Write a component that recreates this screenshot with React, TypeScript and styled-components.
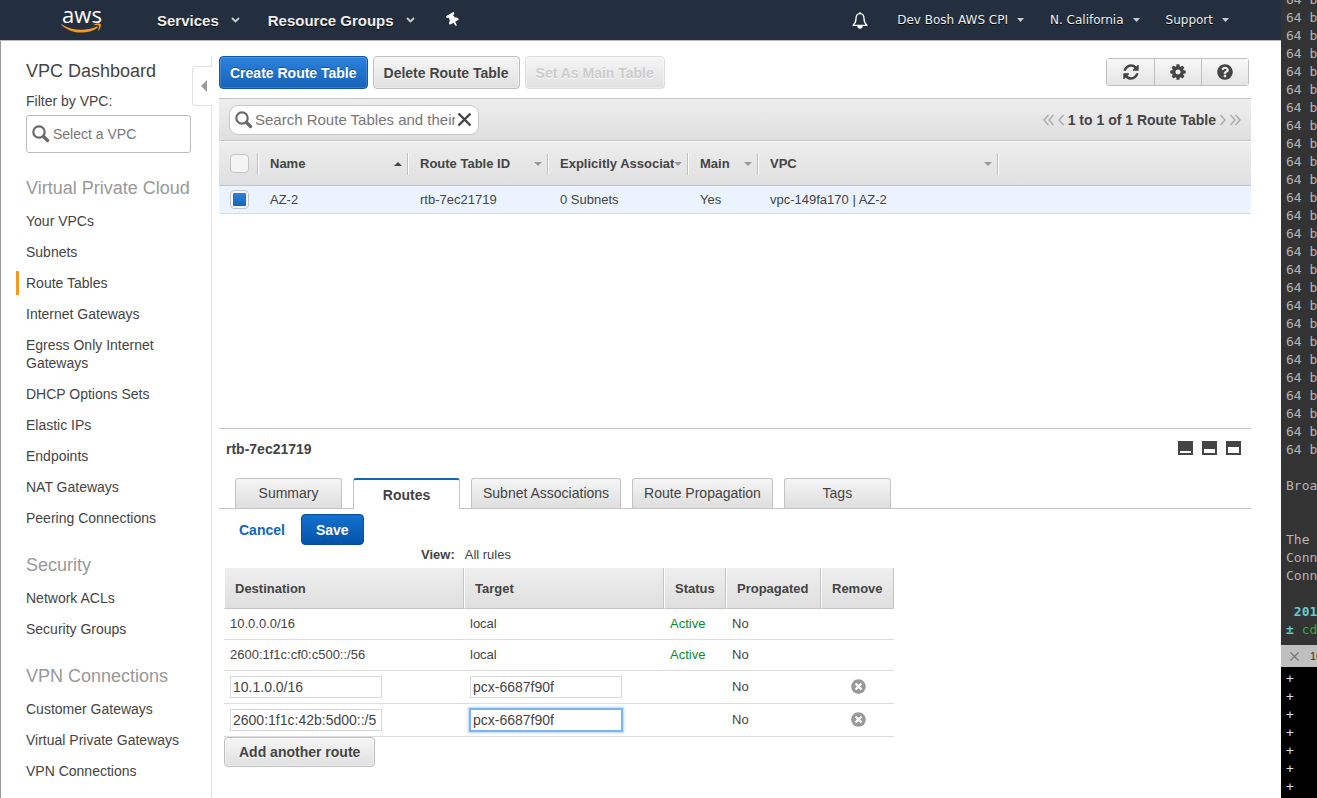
import React from "react";
import styled, { createGlobalStyle, css } from "styled-components";
import { FaQuestionCircle, FaTimesCircle, FaThumbtack } from "react-icons/fa";

const GlobalStyle = createGlobalStyle`
  *, *::before, *::after { box-sizing: border-box; }
  body {
    margin: 0;
    background: #fff;
    color: #444;
    font-family: "Liberation Sans", Arial, sans-serif;
    font-size: 14px;
    line-height: 18px;
  }
  button, input { font-family: inherit; }
  a { color: inherit; text-decoration: none; }
`;

const Desktop = styled.div`
  display: grid;
  grid-template-columns: minmax(0, 1fr) 36px;
  min-height: 100vh;
`;

/* ---------- top bar ---------- */

const Console = styled.div`
  display: flex;
  flex-direction: column;
  min-width: 0;
`;

const TopBar = styled.header`
  display: flex;
  align-items: center;
  justify-content: space-between;
  height: 41px;
  padding: 0 52px 0 61px;
  background: #232f3e;
  border-bottom: 1px solid #b8b8b8;
  color: #eee;
`;

const BarGroup = styled.nav<{ $gap: number }>`
  display: flex;
  align-items: center;
  gap: ${(p) => p.$gap}px;
`;

const Logo = styled.a`
  display: flex;
  flex-direction: column;
  align-items: center;
  width: 42px;
  margin-right: 26px;
  padding-bottom: 3px;
  color: #fff;
  font: 500 22px/18px "Open Sans", sans-serif;
  svg { display: block; }
`;

const BarMenu = styled.button<{ $strong?: boolean }>`
  display: flex;
  align-items: center;
  gap: ${(p) => (p.$strong ? 12 : 9)}px;
  padding: 0;
  border: 0;
  background: none;
  color: #eee;
  white-space: nowrap;
  text-shadow: 0 1px 0 #000;
  ${(p) =>
    p.$strong
      ? css`
          font-size: 15px;
          font-weight: bold;
        `
      : css`
          font-family: "DejaVu Sans", sans-serif;
          font-size: 12px;
        `}
`;

const BarIcon = styled.button`
  display: flex;
  padding: 0 3px;
  border: 0;
  background: none;
  color: #fff;
`;

/* ---------- sidebar ---------- */

const Body = styled.div`
  display: flex;
  flex: 1;
  padding-top: 15px;
  border-left: 1px solid #999;
`;

const Sidebar = styled.aside`
  position: relative;
  flex: 0 0 211px;
  min-width: 0;
  padding: 3px 20px 12px 25px;
  border-right: 1px solid #e4e4e4;
`;

const CollapseTab = styled.button`
  position: absolute;
  top: 10px;
  right: -1px;
  display: flex;
  align-items: center;
  justify-content: flex-end;
  width: 20px;
  height: 40px;
  padding: 0 5px 0 0;
  border: 1px solid #e0e0e0;
  border-right: 0;
  border-radius: 4px 0 0 4px;
  background: #fff;
`;

const SideTitle = styled.a`
  display: block;
  font-size: 18px;
  line-height: 24px;
`;

const FilterLabel = styled.label`
  display: block;
  margin-top: 9px;
`;

const FilterBox = styled.div`
  display: flex;
  align-items: center;
  gap: 3px;
  height: 38px;
  margin-top: 5px;
  padding: 0 5px;
  border: 1px solid #bbb;
  border-radius: 3px;
`;

const BareInput = styled.input<{ $size: number }>`
  flex: 1;
  min-width: 0;
  padding: 0;
  border: 0;
  outline: 0;
  background: transparent;
  color: #444;
  font-size: ${(p) => p.$size}px;
  line-height: 20px;
  &::placeholder { color: #777; opacity: 1; }
`;

const SideHeading = styled.h2`
  margin: 23px 0 9px;
  color: #999;
  font-size: 18px;
  font-weight: normal;
  line-height: 24px;
  white-space: nowrap;
`;

const SideList = styled.ul`
  display: flex;
  flex-direction: column;
  gap: 7px;
  margin: 0;
  padding: 0;
  list-style: none;
`;

const SideLink = styled.a<{ $active?: boolean }>`
  display: block;
  margin-left: -10px;
  padding: 3px 0 3px 7px;
  border-left: 3px solid ${(p) => (p.$active ? "#f8981d" : "transparent")};
`;

/* ---------- main column ---------- */

const Main = styled.main`
  display: flex;
  flex: 1;
  flex-direction: column;
  min-width: 0;
  padding: 0 30px 0 7px;
`;

const Toolbar = styled.div`
  display: flex;
  align-items: center;
  gap: 5px;
  margin-bottom: 9px;
`;

const Button = styled.button<{ $primary?: boolean; $small?: boolean }>`
  height: ${(p) => (p.$small ? 30 : 33)}px;
  padding: 0 ${(p) => (p.$small ? 14 : 10)}px;
  border: 1px solid #bfbfbf;
  border-radius: 4px;
  background: linear-gradient(#f6f6f6, #e0e0e0);
  box-shadow: inset 0 0 0 1px rgba(255, 255, 255, 0.35);
  color: #444;
  font-size: 14px;
  font-weight: bold;
  white-space: nowrap;
  text-shadow: 0 1px 0 #fff;
  ${(p) =>
    p.$primary &&
    css`
      border-color: #1557a5;
      background: linear-gradient(#2d82dc, #1563b8);
      box-shadow: inset 0 0 0 1px rgba(255, 255, 255, 0.15);
      color: #fff;
      text-shadow: 0 -1px 0 rgba(0, 0, 0, 0.3);
    `}
  &:disabled {
    border-color: #dcdcdc;
    color: #ccc;
  }
`;

const IconGroup = styled.div`
  display: flex;
  margin: 0 2px 1px auto;
  border: 1px solid #bfbfbf;
  border-radius: 3px;
`;

const IconButton = styled.button`
  display: flex;
  align-items: center;
  justify-content: center;
  width: 47px;
  height: 26px;
  padding: 0;
  border: 0;
  background: linear-gradient(#f8f8f8, #e4e4e4);
  color: #444;
  & + & { border-left: 1px solid #bfbfbf; }
`;

const ListBar = styled.div`
  display: flex;
  align-items: center;
  justify-content: space-between;
  height: 43px;
  padding: 0 10px;
  border-top: 1px solid #c4c4c4;
  border-bottom: 1px solid #c4c4c4;
  background: linear-gradient(#eee, #dfdfdf);
`;

const SearchBox = styled.div`
  display: flex;
  align-items: center;
  gap: 2px;
  width: 250px;
  height: 30px;
  padding: 0 6px 0 5px;
  border: 1px solid #c8c8c8;
  border-radius: 9px;
  background: #fff;
`;

const ClearButton = styled.button`
  display: flex;
  padding: 0;
  border: 0;
  background: none;
`;

const Pager = styled.div`
  display: flex;
  align-items: center;
  gap: 4px;
  font-weight: bold;
`;

const PageButton = styled.button`
  display: flex;
  padding: 0;
  border: 0;
  background: none;
  color: #aaa;
`;

const ListArea = styled.div`
  flex: 1;
  overflow: hidden;
  padding-bottom: 24px;
`;

const ListTable = styled.table`
  width: 100%;
  table-layout: fixed;
  border-collapse: separate;
  border-spacing: 0;
  font-size: 13px;
  thead tr { background: linear-gradient(#eee, #dfdfdf); }
  th {
    height: 45px;
    padding: 0;
    border-top: 1px solid #fafafa;
    border-bottom: 1px solid #c4c4c4;
    text-align: left;
  }
  td {
    height: 28px;
    padding: 0 11px;
    border-bottom: 1px solid #d5dde6;
    background: #eaf3fe;
  }
`;

const HeadCell = styled.div`
  display: flex;
  align-items: center;
  height: 22px;
  padding: 0 6px 0 11px;
  border-right: 1px solid #fff;
  box-shadow: inset -1px 0 0 #c0c0c0;
  span {
    flex: 1;
    overflow: hidden;
    white-space: nowrap;
  }
`;

const Check = styled.input`
  display: block;
  appearance: none;
  flex: none;
  width: 19px;
  height: 19px;
  margin: 0;
  padding: 2px;
  border: 1px solid #c4c4c4;
  border-radius: 4px;
  background: #f4f4f4;
  &:checked {
    background: linear-gradient(#2d82dc, #1563b8) content-box, #f4f4f4;
  }
`;

/* ---------- detail pane ---------- */

const Detail = styled.section`
  border-top: 1px solid #c8c8c8;
  padding-bottom: 31px;
`;

const DetailHead = styled.div`
  display: flex;
  align-items: center;
  justify-content: space-between;
  height: 40px;
  padding: 0 10px 0 7px;
`;

const DetailTitle = styled.h1`
  margin: 0;
  font-size: 14px;
`;

const LayoutButtons = styled.div`
  display: flex;
  gap: 9px;
  padding-bottom: 2px;
`;

const LayoutButton = styled.button`
  display: flex;
  padding: 0;
  border: 0;
  background: none;
`;

const Tabs = styled.div`
  display: flex;
  gap: 11px;
  height: 31px;
  margin-top: 9px;
  padding: 0 16px;
  border-bottom: 1px solid #c4c4c4;
`;

const Tab = styled.button<{ $active?: boolean }>`
  min-width: 107px;
  height: 30px;
  padding: 0 11px 2px;
  border: 1px solid #c4c4c4;
  border-bottom: 0;
  border-radius: 3px 3px 0 0;
  background: linear-gradient(#f5f5f5, #dedede);
  color: #444;
  font-size: 14px;
  white-space: nowrap;
  ${(p) =>
    p.$active &&
    css`
      height: 31px;
      padding-bottom: 0;
      border-top: 2px solid #1166bb;
      background: #fff;
      font-weight: bold;
    `}
`;

const Actions = styled.div`
  display: flex;
  align-items: center;
  gap: 16px;
  padding: 5px 20px 0;
`;

const CancelLink = styled.a`
  color: #1166bb;
  font-weight: bold;
`;

const SaveButton = styled.button`
  height: 31px;
  padding: 0 14px;
  border: 1px solid #0a4f9c;
  border-radius: 4px;
  background: linear-gradient(#1470d0, #0354a8);
  color: #fff;
  font-size: 14px;
  font-weight: bold;
`;

const ViewRow = styled.div`
  display: flex;
  gap: 10px;
  margin: 1px 0 4px;
  padding-left: 202px;
  font-size: 13px;
`;

const RouteTable = styled.table`
  width: 670px;
  margin-left: 5px;
  table-layout: fixed;
  border-collapse: separate;
  border-spacing: 0;
  font-size: 13px;
  th {
    height: 41px;
    padding: 1px 0 0 10px;
    border-left: 1px solid #fff;
    border-right: 1px solid #c4c4c4;
    border-bottom: 1px solid #c4c4c4;
    background: linear-gradient(#eee, #dfdfdf);
    text-align: left;
  }
  td {
    padding: 0 6px;
    border-bottom: 1px solid #ddd;
  }
`;

const RouteRow = styled.tr<{ $editable: boolean }>`
  height: ${(p) => (p.$editable ? 33 : 31)}px;
`;

const RouteInput = styled.input<{ $focused?: boolean }>`
  display: block;
  width: 152px;
  height: 22px;
  padding: 0 2px;
  border: 1px solid #d8d8d8;
  outline: 0;
  color: #444;
  font-size: 14px;
  ${(p) =>
    p.$focused &&
    css`
      border-color: #7ab4f5;
      box-shadow: 0 0 0 1px #7ab4f5, 0 0 2px 2px #b4d5fa;
    `}
`;

const Status = styled.span`
  color: #0a8a2e;
`;

const RemoveButton = styled.button`
  display: block;
  margin: 0 auto;
  padding: 0 0 2px 2px;
  border: 0;
  background: none;
  color: #999;
  svg { display: block; }
`;

const AddRow = styled.div`
  padding-left: 5px;
`;

/* ---------- terminal ---------- */

const Terminal = styled.aside`
  display: flex;
  flex-direction: column;
  overflow: hidden;
  background: #333;
  font-family: "DejaVu Sans Mono", monospace;
  font-size: 13px;
  white-space: pre;
`;

const LogPane = styled.div`
  display: flex;
  flex: 1 1 0;
  flex-direction: column;
  justify-content: flex-end;
  overflow: hidden;
  padding: 0 0 6px 5px;
  color: #b4b4b4;
`;

const Line = styled.div<{ $color?: string; $bold?: boolean }>`
  flex: none;
  height: 18px;
  color: ${(p) => p.$color ?? "inherit"};
  font-weight: ${(p) => (p.$bold ? "bold" : "normal")};
`;

const TermTab = styled.div`
  display: flex;
  align-items: center;
  gap: 11px;
  height: 22px;
  padding-left: 9px;
  background: #bfbfbf;
  color: #333;
  font: 11px/22px "Liberation Sans", sans-serif;
  svg { flex: none; }
`;

const PlusPane = styled.div`
  padding: 3px 0 2px 5px;
  background: #000;
  color: #ddd;
`;

const Green = styled.span`
  color: #2fae2f;
  font-weight: normal;
`;

/* ---------- drawings ---------- */

const Chevron = () => (
  <svg width="9" height="6" viewBox="0 0 9 6" fill="none" stroke="#ccc" strokeWidth="1.8">
    <path d="M1 1l3.5 3.5L8 1" />
  </svg>
);

const Caret = () => (
  <svg width="7" height="4" viewBox="0 0 7 4" fill="#ccc">
    <path d="M0 0h7L3.500 4z" />
  </svg>
);

const SortArrow = ({ up }: { up?: boolean }) => (
  <svg width="8" height="4" viewBox="0 0 8 4" fill={up ? "#444" : "#999"}>
    <path d={up ? "M0 4L4 0l4 4z" : "M0 0h8L4 4z"} />
  </svg>
);

const MagnifierSvg = styled.svg`
  flex: none;
`;

const Magnifier = () => (
  <MagnifierSvg width="18" height="18" viewBox="0 0 18 18" fill="none" stroke="#6a6a6a">
    <circle cx="7" cy="7" r="5.700" strokeWidth="2.200" />
    <path d="M11.500 11.500l4 4" strokeWidth="3.400" strokeLinecap="round" />
  </MagnifierSvg>
);

const Bell = () => (
  <svg width="16" height="17" viewBox="0 0 16 17" fill="none" stroke="#fff" strokeWidth="1.300">
    <path d="M8 1.600C5 1.600 4 4 4 6.500 4 10.500 2.600 12 1 13.400h14C13.400 12 12 10.500 12 6.500 12 4 11 1.600 8 1.600z" strokeLinejoin="round" />
    <path d="M8 0v2" />
    <path d="M6 14h4a2 2 0 0 1-4 0z" fill="#fff" />
  </svg>
);

const Smile = () => (
  <svg width="42" height="10" viewBox="0 0 42 10" fill="#f8981d">
    <path d="M.6 1.300C6.500 5 13 6.800 20 6.800c5.500 0 11-1.200 15.800-3.300.9-.4 1.600.6.8 1.200C32 8 25.800 9.600 20.400 9.600 12.800 9.600 5.800 6.700.4 1.900c-.4-.4 0-.8.2-.6z" />
    <path d="M37.900 2.700c-.7-.9-3.500-.6-4.800-.4-.4 0-.5-.4-.1-.6 2.200-1.500 6.200-1.200 6.800-.6.500.6-.1 4.600-2.300 6.500-.4.300-.7.100-.5-.2.500-1.300 1.500-3.800.9-4.700z" />
  </svg>
);

const Refresh = () => (
  <svg width="18" height="18" viewBox="0 0 1792 1792" fill="#444">
    <path d="M1639 1056q0 5-1 7-64 268-268 434.500t-478 166.500q-146 0-282.500-55t-243.500-157l-129 129q-19 19-45 19t-45-19-19-45v-448q0-26 19-45t45-19h448q26 0 45 19t19 45-19 45l-137 137q71 66 161 102t187 36q134 0 250-65t186-179q11-17 53-117 8-23 30-23h192q13 0 22.500 9.500t9.500 22.500zm25-800v448q0 26-19 45t-45 19h-448q-26 0-45-19t-19-45 19-45l138-138q-148-137-349-137-134 0-250 65t-186 179q-11 17-53 117-8 23-30 23h-199q-13 0-22.500-9.500t-9.500-22.500v-7q65-268 270-434.500t480-166.500q146 0 284 55.500t245 156.500l130-129q19-19 45-19t45 19 19 45z" />
  </svg>
);

const Cog = () => (
  <svg width="18" height="18" viewBox="0 0 1792 1792" fill="#444">
    <path d="M1152 896q0-106-75-181t-181-75-181 75-75 181 75 181 181 75 181-75 75-181zm512-109v222q0 12-8 23t-20 13l-185 28q-19 54-39 91 35 50 107 138 10 12 10 25t-9 23q-27 37-99 108t-94 71q-12 0-26-9l-138-108q-44 23-91 38-16 136-29 186-7 28-36 28h-222q-14 0-24.500-8.500t-11.500-21.500l-28-184q-49-16-90-37l-141 107q-10 9-25 9-14 0-25-11-126-114-165-168-7-10-7-23 0-12 8-23 15-21 51-66.500t54-70.500q-27-50-41-99l-183-27q-13-2-21-12.500t-8-23.500v-222q0-12 8-23t19-13l186-28q14-46 39-92-40-57-107-138-10-12-10-24 0-10 9-23 26-36 98.500-107.500t94.500-71.500q13 0 26 10l138 107q44-23 91-38 16-136 29-186 7-28 36-28h222q14 0 24.500 8.500t11.500 21.500l28 184q49 16 90 37l142-107q9-9 24-9 13 0 25 10 129 119 165 170 7 8 7 22 0 12-8 23-15 21-51 66.500t-54 70.500q26 50 41 98l183 28q13 2 21 12.500t8 23.500z" />
  </svg>
);

const PageArrow = ({ double, back }: { double?: boolean; back?: boolean }) => {
  const w = double ? 11 : 6;
  return (
    <svg width={w} height="12" viewBox={`0 0 ${w} 12`} fill="none" stroke="currentColor" strokeWidth="1.400">
      <g transform={back ? `translate(${w} 0) scale(-1 1)` : undefined}>
        <path d="M.5 1L5 6 .5 11" />
        {double && <path d="M5.500 1L10 6l-4.500 5" />}
      </g>
    </svg>
  );
};

const PaneIcon = ({ inner }: { inner: number }) => (
  <svg width="15" height="14" viewBox="0 0 15 14">
    <rect width="15" height="14" fill="#444" />
    <rect x="2" y={12 - inner} width="11" height={inner} fill="#fff" />
  </svg>
);

/* ---------- data ---------- */

const sections = [
  {
    title: "Virtual Private Cloud",
    items: [
      "Your VPCs",
      "Subnets",
      "Route Tables",
      "Internet Gateways",
      "Egress Only Internet Gateways",
      "DHCP Options Sets",
      "Elastic IPs",
      "Endpoints",
      "NAT Gateways",
      "Peering Connections",
    ],
  },
  { title: "Security", items: ["Network ACLs", "Security Groups"] },
  {
    title: "VPN Connections",
    items: ["Customer Gateways", "Virtual Private Gateways", "VPN Connections"],
  },
];

const columns = [
  { label: "Name", width: 150, up: true },
  { label: "Route Table ID", width: 140 },
  { label: "Explicitly Associated", width: 140 },
  { label: "Main", width: 70 },
  { label: "VPC", width: 240 },
];

const tabs = ["Summary", "Routes", "Subnet Associations", "Route Propagation", "Tags"];

const routes = [
  { destination: "10.0.0.0/16", target: "local", active: true, editable: false },
  { destination: "2600:1f1c:cf0:c500::/56", target: "local", active: true, editable: false },
  { destination: "10.1.0.0/16", target: "pcx-6687f90f", active: false, editable: true },
  { destination: "2600:1f1c:42b:5d00::/5", target: "pcx-6687f90f", active: false, editable: true, focused: true },
];

const logLines = Array.from({ length: 26 }, () => "64 b");

export default function App() {
  return (
    <>
      <GlobalStyle />
      <Desktop>
        <Console>
          <TopBar>
            <BarGroup $gap={28}>
              <Logo href="#">
                aws
                <Smile />
              </Logo>
              <BarMenu $strong>
                Services <Chevron />
              </BarMenu>
              <BarMenu $strong>
                Resource Groups <Chevron />
              </BarMenu>
              <BarIcon aria-label="Pin shortcuts">
                <FaThumbtack size={14} transform="rotate(-30)" />
              </BarIcon>
            </BarGroup>
            <BarGroup $gap={26}>
              <BarIcon aria-label="Notifications">
                <Bell />
              </BarIcon>
              {["Dev Bosh AWS CPI", "N. California", "Support"].map((label) => (
                <BarMenu key={label}>
                  {label} <Caret />
                </BarMenu>
              ))}
            </BarGroup>
          </TopBar>

          <Body>
            <Sidebar>
              <CollapseTab aria-label="Collapse sidebar">
                <svg width="6" height="12" viewBox="0 0 6 12" fill="#999">
                  <path d="M6 0v12L0 6z" />
                </svg>
              </CollapseTab>
              <SideTitle href="#">VPC Dashboard</SideTitle>
              <FilterLabel htmlFor="vpc-filter">Filter by VPC:</FilterLabel>
              <FilterBox>
                <Magnifier />
                <BareInput id="vpc-filter" $size={14} placeholder="Select a VPC" />
              </FilterBox>
              {sections.map((section) => (
                <nav key={section.title}>
                  <SideHeading>{section.title}</SideHeading>
                  <SideList>
                    {section.items.map((item) => (
                      <li key={item}>
                        <SideLink href="#" $active={item === "Route Tables"}>
                          {item}
                        </SideLink>
                      </li>
                    ))}
                  </SideList>
                </nav>
              ))}
            </Sidebar>

            <Main>
              <Toolbar>
                <Button $primary>Create Route Table</Button>
                <Button>Delete Route Table</Button>
                <Button disabled>Set As Main Table</Button>
                <IconGroup>
                  <IconButton aria-label="Refresh">
                    <Refresh />
                  </IconButton>
                  <IconButton aria-label="Settings">
                    <Cog />
                  </IconButton>
                  <IconButton aria-label="Help">
                    <FaQuestionCircle size={16} />
                  </IconButton>
                </IconGroup>
              </Toolbar>

              <ListBar>
                <SearchBox>
                  <Magnifier />
                  <BareInput
                    $size={15}
                    aria-label="Search route tables"
                    placeholder="Search Route Tables and their attributes"
                  />
                  <ClearButton aria-label="Clear search">
                    <svg width="15" height="15" viewBox="0 0 15 15" stroke="#444" strokeWidth="2.400">
                      <path d="M1.500 1.500l12 12M13.500 1.500l-12 12" />
                    </svg>
                  </ClearButton>
                </SearchBox>
                <Pager>
                  <PageButton aria-label="First page">
                    <PageArrow double back />
                  </PageButton>
                  <PageButton aria-label="Previous page">
                    <PageArrow back />
                  </PageButton>
                  1 to 1 of 1 Route Table
                  <PageButton aria-label="Next page">
                    <PageArrow />
                  </PageButton>
                  <PageButton aria-label="Last page">
                    <PageArrow double />
                  </PageButton>
                </Pager>
              </ListBar>

              <ListArea>
                <ListTable>
                  <colgroup>
                    <col width={40} />
                    {columns.map((c) => (
                      <col key={c.label} width={c.width} />
                    ))}
                    <col />
                  </colgroup>
                  <thead>
                    <tr>
                      <th>
                        <HeadCell>
                          <Check type="checkbox" aria-label="Select all route tables" />
                        </HeadCell>
                      </th>
                      {columns.map((c) => (
                        <th key={c.label}>
                          <HeadCell>
                            <span>{c.label}</span>
                            <SortArrow up={c.up} />
                          </HeadCell>
                        </th>
                      ))}
                      <th />
                    </tr>
                  </thead>
                  <tbody>
                    <tr>
                      <td>
                        <Check type="checkbox" defaultChecked aria-label="Select AZ-2" />
                      </td>
                      <td>AZ-2</td>
                      <td>rtb-7ec21719</td>
                      <td>0 Subnets</td>
                      <td>Yes</td>
                      <td>vpc-149fa170 | AZ-2</td>
                      <td />
                    </tr>
                  </tbody>
                </ListTable>
              </ListArea>

              <Detail>
                <DetailHead>
                  <DetailTitle>rtb-7ec21719</DetailTitle>
                  <LayoutButtons>
                    <LayoutButton aria-label="Minimise details">
                      <PaneIcon inner={2} />
                    </LayoutButton>
                    <LayoutButton aria-label="Split view">
                      <PaneIcon inner={4} />
                    </LayoutButton>
                    <LayoutButton aria-label="Maximise details">
                      <PaneIcon inner={6} />
                    </LayoutButton>
                  </LayoutButtons>
                </DetailHead>
                <Tabs role="tablist">
                  {tabs.map((tab) => (
                    <Tab key={tab} role="tab" $active={tab === "Routes"} aria-selected={tab === "Routes"}>
                      {tab}
                    </Tab>
                  ))}
                </Tabs>
                <Actions>
                  <CancelLink href="#">Cancel</CancelLink>
                  <SaveButton>Save</SaveButton>
                </Actions>
                <ViewRow>
                  <b>View:</b>
                  <span>All rules</span>
                </ViewRow>
                <RouteTable>
                  <colgroup>
                    <col width={240} />
                    <col width={200} />
                    <col width={62} />
                    <col width={95} />
                    <col width={73} />
                  </colgroup>
                  <thead>
                    <tr>
                      <th>Destination</th>
                      <th>Target</th>
                      <th>Status</th>
                      <th>Propagated</th>
                      <th>Remove</th>
                    </tr>
                  </thead>
                  <tbody>
                    {routes.map((r) => (
                      <RouteRow key={r.destination} $editable={r.editable}>
                        <td>
                          {r.editable ? (
                            <RouteInput aria-label="Destination" defaultValue={r.destination} />
                          ) : (
                            r.destination
                          )}
                        </td>
                        <td>
                          {r.editable ? (
                            <RouteInput aria-label="Target" defaultValue={r.target} $focused={r.focused} />
                          ) : (
                            r.target
                          )}
                        </td>
                        <td>{r.active && <Status>Active</Status>}</td>
                        <td>No</td>
                        <td>
                          {r.editable && (
                            <RemoveButton aria-label="Remove route">
                              <FaTimesCircle size={15} />
                            </RemoveButton>
                          )}
                        </td>
                      </RouteRow>
                    ))}
                  </tbody>
                </RouteTable>
                <AddRow>
                  <Button $small>Add another route</Button>
                </AddRow>
              </Detail>
            </Main>
          </Body>
        </Console>

        <Terminal>
          <LogPane>
            {logLines.map((text, i) => (
              <Line key={i}>{text}</Line>
            ))}
            <Line />
            <Line>Broa</Line>
            <Line />
            <Line />
            <Line>The </Line>
            <Line>Conn</Line>
            <Line>Conn</Line>
            <Line />
            <Line $color="#6cc" $bold>
              {" 201"}
            </Line>
            <Line $color="#6cc" $bold>
              ± <Green>cd</Green>
            </Line>
          </LogPane>
          <TermTab>
            <svg width="9" height="9" viewBox="0 0 9 9" stroke="#777" strokeWidth="1.200">
              <path d="M.5.5l8 8M8.500.5l-8 8" />
            </svg>
            10
          </TermTab>
          <PlusPane>
            {Array.from({ length: 7 }, (_, i) => (
              <Line key={i}>+</Line>
            ))}
          </PlusPane>
        </Terminal>
      </Desktop>
    </>
  );
}
